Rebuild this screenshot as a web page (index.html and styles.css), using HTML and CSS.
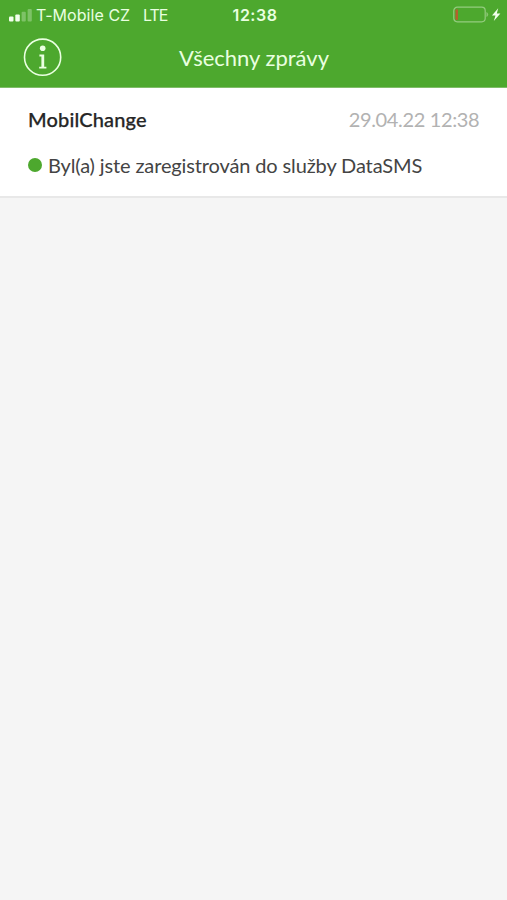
FILE: index.html
```html
<!DOCTYPE html>
<html lang="cs">
<head>
<meta charset="utf-8">
<title>Všechny zprávy</title>
<link rel="stylesheet" href="styles.css">
</head>
<body>
<header class="header">
  <div class="status">
    <div class="carrier">
      <svg class="signal" width="23" height="14" viewBox="0 0 23 14" fill="#f2ffec"><rect y="8.5" width="4.5" height="5" rx="1"/><rect x="6.3" y="6.5" width="4.5" height="7" rx="1"/><rect x="12.6" y="3.7" width="4.2" height="9.8" rx="1" opacity=".3"/><rect x="18.6" y="1" width="4.2" height="12.5" rx="1" opacity=".3"/></svg>
      <span class="operator">T-Mobile CZ</span>
      <span class="network">LTE</span>
    </div>
    <span class="clock">12:38</span>
    <svg class="battery" width="48" height="18" viewBox="0 0 48 18"><rect x=".8" y="1.2" width="31.4" height="14.6" rx="3.5" fill="none" stroke="#94cb7f" stroke-width="1.2"/><rect x="2.5" y="3.2" width="2.5" height="10.8" rx="1" fill="#b5602c"/><path d="M33.8 6.4q2 2.1 0 4.2z" fill="#94cb7f" stroke="#94cb7f" stroke-width=".5"/><path d="M45.2 2.2 39 9.5h3.5L40.8 15l6.6-7.5h-3.6z" fill="#f2ffec"/></svg>
  </div>
  <nav class="nav">
    <svg class="info" width="40" height="40" viewBox="0 0 40 40"><circle cx="19.6" cy="19.2" r="18.1" fill="none" stroke="#eaffe1" stroke-width="1.6"/><circle cx="19.7" cy="10.3" r="2.8" fill="#eaffe1"/><path d="M16.4 16.6h4.8v12.2h2.2v1.8h-7.2v-1.8h2.2V18.4h-2z" fill="#eaffe1"/></svg>
    <h1 class="title">Všechny zprávy</h1>
  </nav>
</header>
<main>
  <article class="message">
    <div class="meta">
      <span class="sender">MobilChange</span>
      <time class="date">29.04.22 12:38</time>
    </div>
    <div class="body">
      <span class="dot"></span>
      <span class="text">Byl(a) jste zaregistrován do služby DataSMS</span>
    </div>
  </article>
</main>
</body>
</html>
```
FILE: styles.css
```css
* { box-sizing: border-box; }
body { margin: 0; min-height: 900px; background: #f5f5f5; font-family: Lato, sans-serif; }
.header { height: 88px; background: #4da82e; border-bottom: 1px solid #7fbd69; color: #e9ffe0; }
.status { height: 30px; display: grid; grid-template-columns: 1fr auto 1fr; align-items: center; padding: 0 6px 0 9px; font: 16px/30px Inter, sans-serif; }
.carrier { display: flex; align-items: center; white-space: nowrap; }
.signal { margin-right: 4px; }
.operator { width: 107px; letter-spacing: 0.05px; }
.network { letter-spacing: -1.1px; }
.clock { font-weight: 600; letter-spacing: 0.5px; }
.battery { justify-self: end; }
.nav { height: 57px; display: grid; grid-template-columns: 40px 1fr 40px; align-items: center; padding: 0 22px 2px 23px; }
.title { margin: 0; text-align: center; font-size: 22px; line-height: 30px; font-weight: 400; }
.message { height: 110px; padding: 19px 28px 0 28px; background: #fff; border-bottom: 2px solid #e8e8e8; }
.meta { display: flex; justify-content: space-between; height: 24px; line-height: 24px; }
.sender { font-size: 20px; font-weight: 500; letter-spacing: 0.15px; color: #262626; -webkit-text-stroke: 0.25px #262626; }
.date { font-size: 20px; font-weight: 400; letter-spacing: -0.35px; margin-right: -0.35px; color: #b2b2b2; }
.body { display: flex; align-items: center; gap: 6px; margin-top: 21px; height: 26px; line-height: 24px; }
.dot { width: 14px; height: 14px; border-radius: 50%; background: #4da82e; }
.text { font-size: 20px; letter-spacing: -0.13px; color: #444; white-space: nowrap; padding-bottom: 1px; }
```
